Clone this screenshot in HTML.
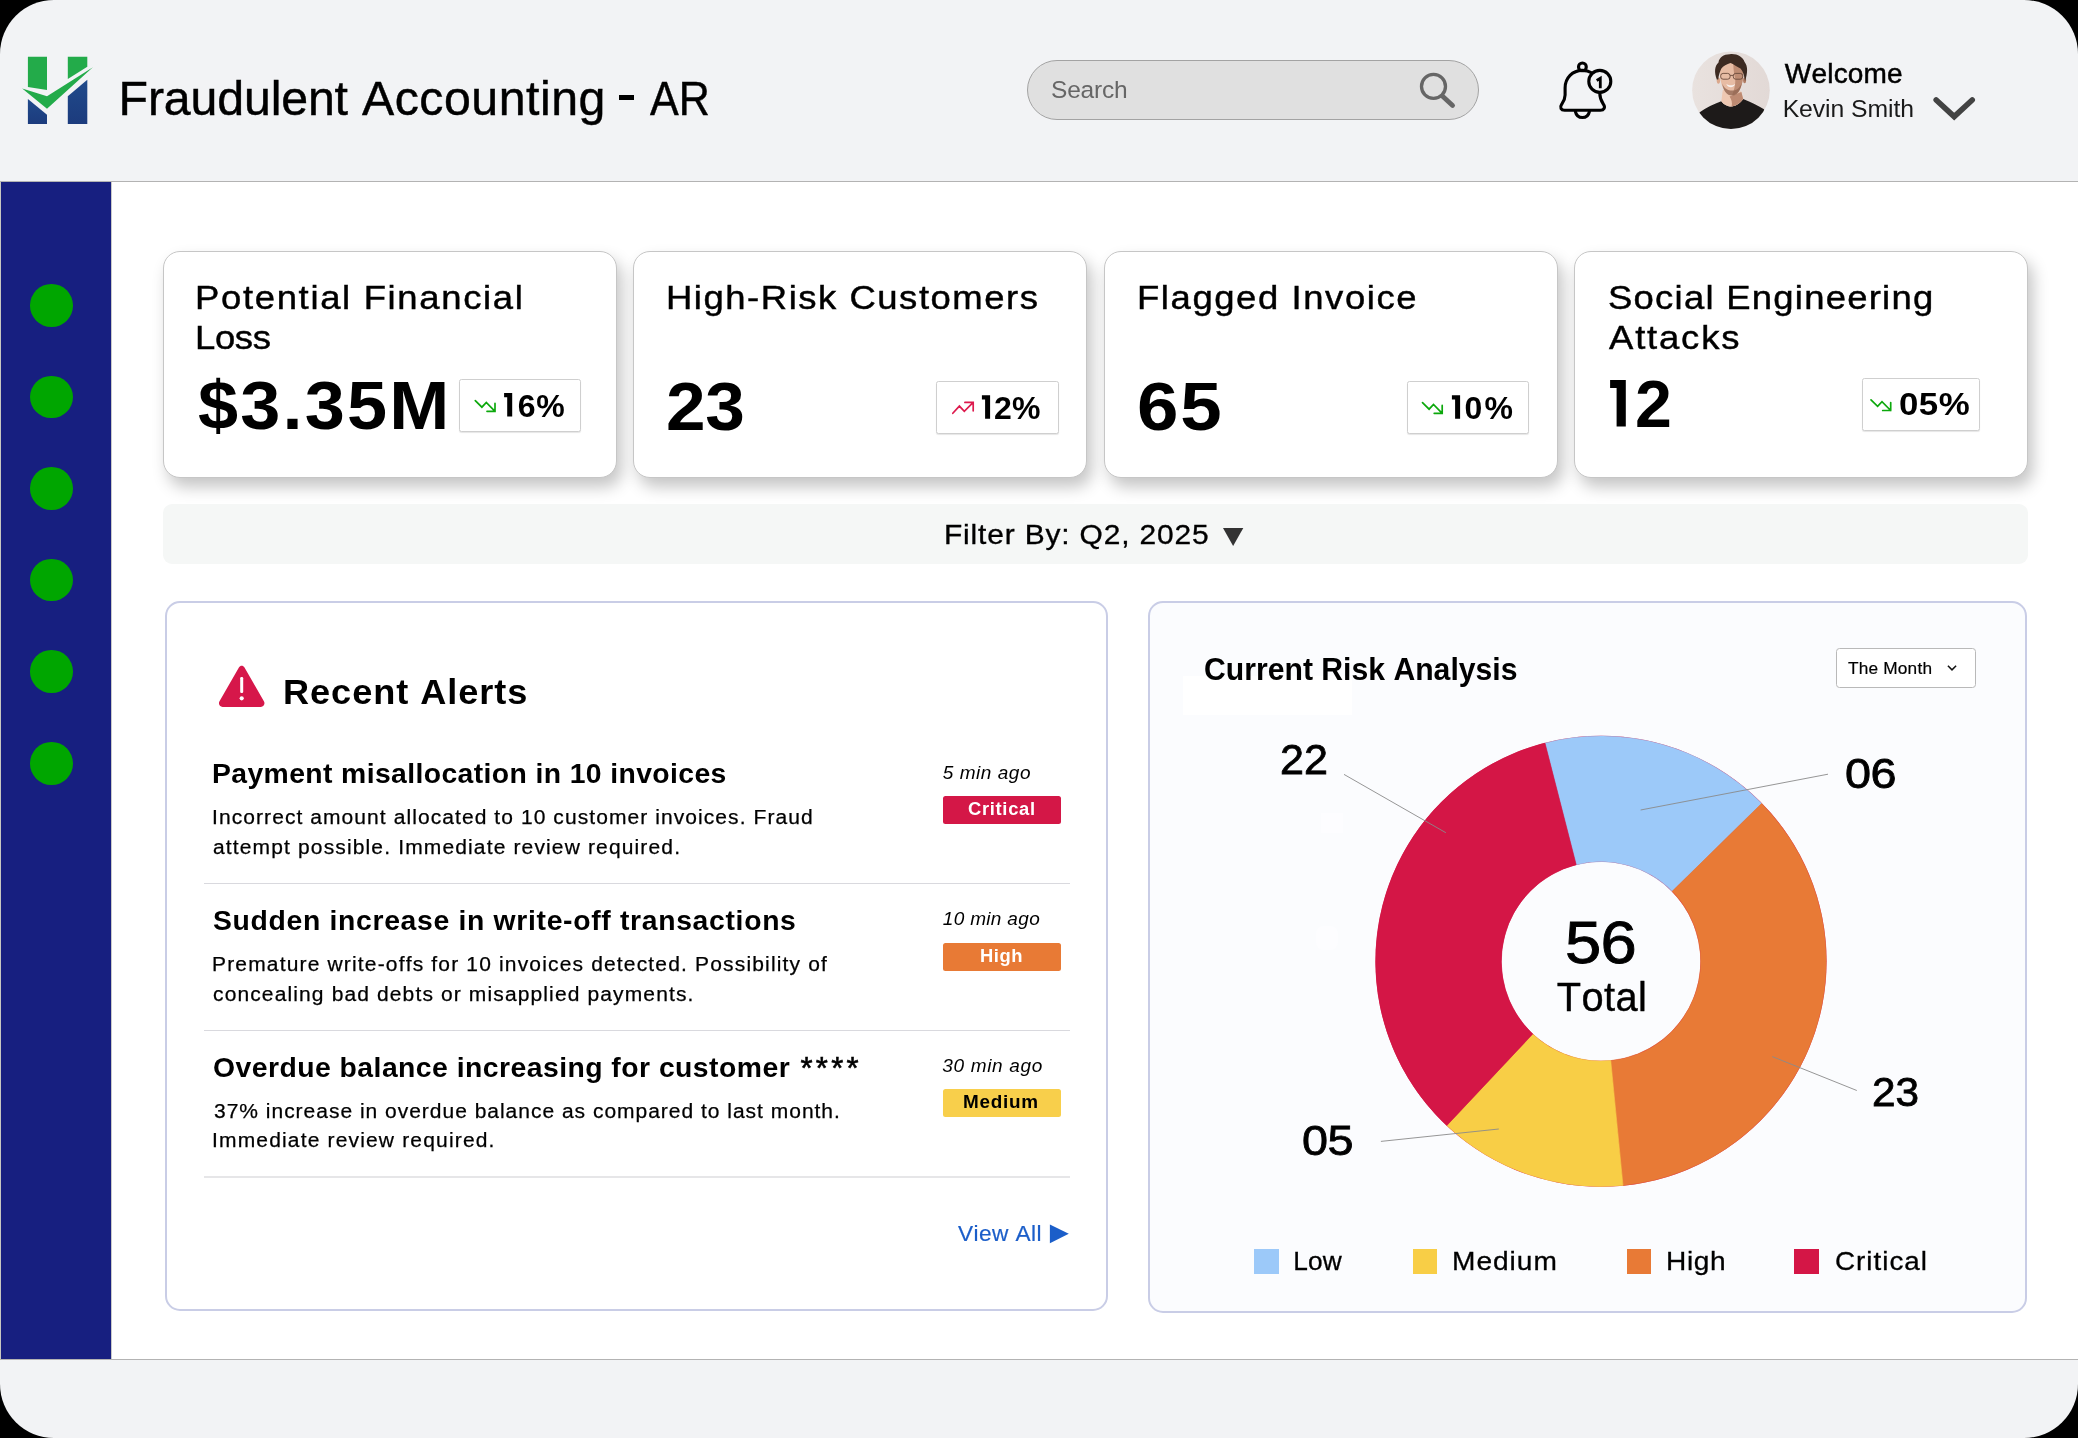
<!DOCTYPE html>
<html><head><meta charset="utf-8"><title>Fraudulent Accounting - AR</title>
<style>
*{box-sizing:border-box;margin:0;padding:0}
html,body{width:2078px;height:1438px;background:#000;overflow:hidden}
body{font-family:"Liberation Sans",sans-serif;color:#000}
.page{position:absolute;left:0;top:0;width:2078px;height:1438px;background:#f2f3f5;border-radius:54px;overflow:hidden;will-change:transform}
.a{position:absolute}
.t{position:absolute;white-space:nowrap;font-kerning:none;font-variant-ligatures:none}
.main{left:0;top:182px;width:2078px;height:1177px;background:#fff}
.hl{left:0;width:2078px;height:1.5px;background:#b3b3b3}
.side{left:1px;top:182px;width:110px;height:1177px;background:#171f80;box-shadow:1px 0 0 #c9c9c9}
.dot{left:30px;width:42.6px;height:42.6px;border-radius:50%;background:#00a600}
.card{top:251px;width:454px;height:227px;background:#fff;border:1px solid #c6c6c6;border-radius:17px;box-shadow:5px 9px 16px rgba(0,0,0,.23)}
.pb{background:#fff;border:1px solid #cfcfcf;border-radius:2.5px;box-shadow:0 1px 1px rgba(0,0,0,.10)}
.filter{left:163px;top:504px;width:1865px;height:60px;background:#f5f7f6;border-radius:9px}
.panel{border:2px solid #c9cde6;border-radius:15px}
.div{left:204px;width:865.5px;height:1.5px;background:#d9d9de}
.bd{left:942.5px;width:118px;height:28px;border-radius:2.5px}
.lg{top:1249.4px;width:24.8px;height:24.6px}
</style></head><body>
<div class="page">
<div class="a main"></div>
<div class="a hl" style="top:180.6px"></div>
<div class="a hl" style="top:1358.8px"></div>
<div class="a" style="left:0;top:182px;width:1px;height:1177px;background:#c7c7c1"></div>
<div class="a side"></div>
<div class="a dot" style="top:284px"></div>
<div class="a dot" style="top:375.6px"></div>
<div class="a dot" style="top:467.1px"></div>
<div class="a dot" style="top:558.8px"></div>
<div class="a dot" style="top:650.4px"></div>
<div class="a dot" style="top:742.1px"></div>

<!-- logo -->
<svg class="a" style="left:0;top:0" width="130" height="160" viewBox="0 0 130 160">
<defs><linearGradient id="gb" x1="0" y1="0" x2="0" y2="1"><stop offset="0" stop-color="#204a8b"/><stop offset="1" stop-color="#1c3b7d"/></linearGradient></defs>
<path d="M27.9 56.7H47V90L27.9 87Z" fill="#23ab4a"/>
<path d="M67.8 56.7H87.3V66.7L67.8 78.9Z" fill="#23ab4a"/>
<path d="M27.9 98.9L47 114.8V124H27.9Z" fill="url(#gb)"/>
<path d="M67.8 96.2L87.3 79.8V124H67.8Z" fill="url(#gb)"/>
<path d="M22.2 88.4L47 96.2L92.9 67.2L47 108.7Z" fill="#23ab4a"/>
</svg>

<div class="a" style="left:618.7px;top:95.4px;width:15.4px;height:4.5px;background:#000"></div>
<!-- search -->
<div class="a" style="left:1027px;top:60px;width:452px;height:59.6px;border-radius:30px;background:#e0e0e0;border:1.2px solid #a3a3a3"></div>
<svg class="a" style="left:1410px;top:65px" width="60" height="50" viewBox="1410 65 60 50">
<circle cx="1433.5" cy="86.4" r="12" fill="none" stroke="#666" stroke-width="3.3"/>
<path d="M1442.6 96.2 L1452.6 105.4" stroke="#666" stroke-width="4.8" stroke-linecap="round"/>
</svg>

<!-- bell -->
<svg class="a" style="left:1550px;top:55px" width="70" height="70" viewBox="1550 55 70 70" fill="none" stroke="#000" stroke-width="3.1" stroke-linecap="round" stroke-linejoin="round">
<circle cx="1582.4" cy="66.9" r="3.9"/>
<path d="M1591.5 72.8C1589 71.2 1586 70.4 1582.4 70.4C1572.5 70.4 1565.1 78 1565.1 88L1565.1 95C1565.1 99.5 1563.6 101.5 1561.6 104.4C1559.5 107.5 1561 110.2 1564.6 110.2L1600.4 110.2C1604 110.2 1605.6 107.5 1603.5 104.4C1601.4 101.3 1599.8 99 1599.8 93.5"/>
<path d="M1575.4 111.6C1576.2 115.4 1579 117.5 1582.4 117.5C1585.8 117.5 1588.6 115.4 1589.4 111.6"/>
<circle cx="1599.8" cy="81.4" r="11" fill="#f2f3f5"/>
<path d="M1596.7 80.5L1600.3 78.3L1600.3 88.2" stroke-width="2.8" stroke-linejoin="miter" stroke-linecap="butt"/>
</svg>

<!-- avatar -->
<svg class="a" style="left:1691px;top:50px" width="80" height="80" viewBox="1691 50 80 80">
<defs><clipPath id="av"><circle cx="1730.95" cy="90.2" r="38.8"/></clipPath>
<linearGradient id="avb" x1="0" y1="0" x2="1" y2="0"><stop offset="0" stop-color="#e9e2df"/><stop offset="1" stop-color="#e2d9d6"/></linearGradient></defs>
<g clip-path="url(#av)">
<rect x="1691" y="50" width="80" height="80" fill="url(#avb)"/>
<path d="M1688 134L1699.7 112.3C1706 107.5 1714 104 1721.3 101.2C1724 105 1728 106.4 1731.2 106.4C1735.5 106.4 1740 103.5 1743.2 99.1C1750 102 1758 105.5 1764 109.3L1774 134Z" fill="#1d1a19"/>
<path d="M1722.8 90L1721.3 101.2C1724 105 1728 106.4 1731.2 106.4C1735.5 106.4 1740 103.5 1743.2 99.1L1741.2 91.5Z" fill="#eec8b2"/>
<path d="M1729.5 96.5L1741.4 92L1743.2 99.1C1740 103.5 1736 106.2 1731.6 106.4C1732.6 103 1731.5 99.5 1729.5 96.5Z" fill="#bd8a72"/>
<ellipse cx="1718.4" cy="80.6" rx="1.7" ry="3.1" fill="#dba88c"/><ellipse cx="1744.6" cy="80.2" rx="1.5" ry="3" fill="#b07c63"/>
<path d="M1719.8 72C1719.8 64 1725 61 1731.5 61C1738.5 61 1743.6 64.5 1743.4 73C1743.4 83 1739.5 95.4 1732 95.4C1725 95.4 1719.8 84 1719.8 72Z" fill="#e7bca4"/>
<path d="M1733.4 61.2C1739.2 61.6 1743.6 65 1743.4 73C1743.4 83 1739.5 95.4 1732 95.4C1734.6 89 1736.4 82 1734.6 76C1733.6 71 1733.2 66 1733.4 61.2Z" fill="#b47f66" opacity=".8"/>
<path d="M1722.3 83.5C1724.5 89 1728 90.6 1732 90.6C1736 90.6 1739.6 88.4 1741.6 83.2C1740.8 90.6 1737 95.6 1732 95.6C1726.6 95.6 1723.1 90.2 1722.3 83.5Z" fill="#8f6450" opacity=".75"/>
<path d="M1726.3 83.9C1729 85.7 1733 85.7 1735.2 83.7C1734 88.2 1728 88.4 1726.3 83.9Z" fill="#f7f1ed"/>
<path d="M1716.8 79.6C1714 72 1714.6 66 1718.5 62.5C1719 57.5 1724 54 1730 54.2C1737 53.5 1743 57 1744.6 62C1748 66 1747.8 73 1745 81.2C1744.4 76 1743.2 71.5 1740.5 68.5C1736.5 66.5 1733.5 64 1730.5 63C1727 64 1723 66 1721.4 68.5C1719.8 71.5 1718.6 75.5 1718.3 79.6Z" fill="#3c2a21"/>
<g fill="none" stroke="#6a4a3b" stroke-width="0.9"><rect x="1720.7" y="73.4" width="9.4" height="5.8" rx="2.4"/><rect x="1733.3" y="73.4" width="9.4" height="5.8" rx="2.4"/><path d="M1730.1 75.4L1733.3 75.4"/></g>
</g>
</svg>

<!-- chevron -->
<svg class="a" style="left:1925px;top:90px" width="60" height="40" viewBox="1925 90 60 40"><path d="M1936.2 100L1954.2 116.6L1972.2 100" fill="none" stroke="#434343" stroke-width="5.6" stroke-linecap="round" stroke-linejoin="miter"/></svg>

<!-- cards -->
<div class="a card" style="left:163px"></div>
<div class="a card" style="left:633px"></div>
<div class="a card" style="left:1104px"></div>
<div class="a card" style="left:1574px"></div>
<div class="a pb" style="left:459.3px;top:379.3px;width:121.5px;height:52.5px"></div>
<div class="a pb" style="left:936.2px;top:381.2px;width:122.5px;height:52.8px"></div>
<div class="a pb" style="left:1406.5px;top:381.2px;width:122.5px;height:52.8px"></div>
<div class="a pb" style="left:1862.1px;top:378.1px;width:118px;height:53px"></div>
<svg class="a" style="left:0;top:370px" width="2078" height="70" viewBox="0 370 2078 70" fill="none" stroke-width="1.7" stroke-linecap="round" stroke-linejoin="miter">
<g stroke="#0ca80c">
<path d="M475.3 400.6L481.9 407.2L486.3 402.5L495 411.3M495 403.4L495 411.3L487 411.3"/>
<path d="M1422.5 402.6L1429.1 409.2L1433.5 404.5L1442.2 413.3M1442.2 405.4L1442.2 413.3L1434.2 413.3"/>
<path d="M1871 399.8L1877.6 406.4L1882 401.7L1890.7 410.5M1890.7 402.6L1890.7 410.5L1882.7 410.5"/>
</g>
<path stroke="#dd1a4d" d="M952.8 413.3L959.4 406.1L964.3 411.3L973.2 402.4M964.9 402.4L973.2 402.4L973.2 410.8"/>
</svg>

<!-- filter -->
<div class="a filter"></div>
<svg class="a" style="left:1220px;top:524px" width="30" height="26" viewBox="1220 524 30 26"><path d="M1223 527.9L1243.3 527.9L1233.1 545.9Z" fill="#333"/></svg>

<!-- alerts panel -->
<div class="a panel" style="left:164.6px;top:600.5px;width:943.4px;height:710px;background:#fff"></div>
<svg class="a" style="left:210px;top:660px" width="60" height="52" viewBox="210 660 60 52">
<path d="M238.9 667.6C240.3 665.2 243.1 665.2 244.5 667.6L263.9 701.3C265.4 703.9 263.8 706.9 260.8 706.9L222.6 706.9C219.6 706.9 218 703.9 219.5 701.3Z" fill="#d6174a"/>
<rect x="240.2" y="677" width="3" height="16" rx="1.2" fill="#fff"/><circle cx="241.7" cy="698.3" r="2.1" fill="#fff"/>
</svg>
<div class="a div" style="top:882.6px"></div>
<div class="a div" style="top:1029.6px"></div>
<div class="a div" style="top:1176.3px;background:#e6e6e8"></div>
<div class="a bd" style="top:796px;background:#d41747"></div>
<div class="a bd" style="top:942.6px;background:#e87a35"></div>
<div class="a bd" style="top:1089.2px;background:#f8cf4b"></div>
<svg class="a" style="left:1045px;top:1220px" width="30" height="28" viewBox="1045 1220 30 28"><path d="M1049.9 1224.4L1068.8 1233.8L1049.9 1243.2Z" fill="#1b5ec9"/></svg>

<!-- risk panel -->
<div class="a panel" style="left:1148.4px;top:600.5px;width:879px;height:712px;background:#fbfcfe"></div>
<div class="a" style="left:1183px;top:675.6px;width:169px;height:39.4px;background:#fff"></div>
<div class="a" style="left:1321.4px;top:812.7px;width:21.8px;height:20px;background:#fdfdff"></div>
<div class="a" style="left:1316px;top:926px;width:22px;height:24px;background:#fdfdff;border-radius:8px"></div>
<div class="a" style="left:1836px;top:648.2px;width:140px;height:39.6px;background:#fff;border:1px solid #b9b9b9;border-radius:3.5px"></div>
<svg class="a" style="left:1940px;top:660px" width="24" height="16" viewBox="1940 660 24 16"><path d="M1947.9 665.8L1952 669.9L1956.1 665.8" fill="none" stroke="#111" stroke-width="1.5"/></svg>
<svg class="a" style="left:1150px;top:700px" width="876" height="520" viewBox="1150 700 876 520">
<circle cx="1601.0" cy="961.3" r="225.54999999999998" fill="#d41646"/>
<circle cx="1601.0" cy="961.3" r="99.5" fill="#fbfcfe"/>
<path d="M1545.00 743.18A225.2 225.2 0 0 1 1761.62 803.46L1672.18 891.35A99.8 99.8 0 0 0 1576.18 864.64Z" fill="#9cc9f9" stroke="#9cc9f9" stroke-width="0.6"/>
<path d="M1761.62 803.46A225.2 225.2 0 0 1 1622.98 1185.43L1610.74 1060.62A99.8 99.8 0 0 0 1672.18 891.35Z" fill="#e87a36" stroke="#e87a36" stroke-width="0.6"/>
<path d="M1622.98 1185.43A225.2 225.2 0 0 1 1446.84 1125.46L1532.68 1034.05A99.8 99.8 0 0 0 1610.74 1060.62Z" fill="#f8ce46" stroke="#f8ce46" stroke-width="0.6"/>
<path d="M1446.84 1125.46A225.2 225.2 0 0 1 1545.00 743.18L1576.18 864.64A99.8 99.8 0 0 0 1532.68 1034.05Z" fill="#d41646" stroke="#d41646" stroke-width="0.6"/>
<g stroke="#8a8a8a" stroke-width="0.9" fill="none">
<path d="M1344 774.4L1445.8 832.7"/>
<path d="M1640.6 810L1828 774.2"/>
<path d="M1772.3 1056.6L1856.8 1090.5"/>
<path d="M1380.9 1141.4L1498.8 1129"/>
</g>
</svg>
<div class="a lg" style="left:1253.8px;background:#9cc9f9"></div>
<div class="a lg" style="left:1412.7px;background:#f8ce46"></div>
<div class="a lg" style="left:1626.7px;background:#e87a36"></div>
<div class="a lg" style="left:1794.3px;background:#d41646"></div>

<svg class="a" style="left:0;top:370px" width="2078" height="70" viewBox="0 370 2078 70">
<path d="M1610.1 380.1H1625.8V426.6H1616.6V388.1H1610.1Z" fill="#000"/>
<path d="M504.1 393.1H512.2V416.6H507.2V397.2H504.1Z" fill="#000"/>
<path d="M981.9 395.3H990.1V418.7H985.1V399.5H981.9Z" fill="#000"/>
<path d="M1451.9 395.3H1460.1V418.7H1455.1V399.5H1451.9Z" fill="#000"/>
</svg>
<div class="t" id="title" style="left:118.57px;top:74.30px;font-size:48.25px;line-height:48.25px;letter-spacing:-0.134px;-webkit-text-stroke:0.45px #000;">Fraudulent</div>
<div class="t" id="title2" style="left:361.93px;top:74.30px;font-size:48.25px;line-height:48.25px;letter-spacing:0.525px;-webkit-text-stroke:0.45px #000;">Accounting</div>
<div class="t" id="title4" style="left:649.64px;top:74.30px;font-size:48.25px;line-height:48.25px;letter-spacing:0.000px;transform:scaleX(0.8926559215665563);transform-origin:0 0;-webkit-text-stroke:0.45px #000;">AR</div>
<div class="t" id="search" style="left:1051.09px;top:77.61px;font-size:24.50px;line-height:24.50px;letter-spacing:-0.225px;color:#666;">Search</div>
<div class="t" id="welcome" style="left:1784.83px;top:59.74px;font-size:28.00px;line-height:28.00px;letter-spacing:0.196px;-webkit-text-stroke:0.5px #000;">Welcome</div>
<div class="t" id="kevin" style="left:1782.67px;top:97.19px;font-size:24.75px;line-height:24.75px;letter-spacing:-0.061px;color:#1a1a1a;">Kevin Smith</div>
<div class="t" id="c1a" style="left:195.33px;top:280.67px;font-size:33.75px;line-height:33.75px;letter-spacing:1.545px;transform:scaleX(1.08);transform-origin:0 0;-webkit-text-stroke:0.45px #000;">Potential Financial</div>
<div class="t" id="c1b" style="left:195.33px;top:320.67px;font-size:33.75px;line-height:33.75px;letter-spacing:-0.320px;transform:scaleX(1.08);transform-origin:0 0;-webkit-text-stroke:0.45px #000;">Loss</div>
<div class="t" id="c1n" style="left:197.85px;top:370.57px;font-size:68.00px;line-height:68.00px;letter-spacing:2.029px;font-weight:bold;transform:scaleX(1.06);transform-origin:0 0;">$3.35M</div>
<div class="t" id="c1p" style="left:517.63px;top:389.76px;font-size:32.00px;line-height:32.00px;letter-spacing:0.866px;font-weight:bold;">6%</div>
<div class="t" id="c2a" style="left:666.03px;top:280.67px;font-size:33.75px;line-height:33.75px;letter-spacing:1.422px;transform:scaleX(1.08);transform-origin:0 0;-webkit-text-stroke:0.45px #000;">High-Risk Customers</div>
<div class="t" id="c2n" style="left:666.33px;top:373.29px;font-size:67.75px;line-height:67.75px;letter-spacing:-0.181px;font-weight:bold;transform:scaleX(1.05);transform-origin:0 0;">23</div>
<div class="t" id="c2p" style="left:993.99px;top:391.76px;font-size:32.00px;line-height:32.00px;letter-spacing:0.103px;font-weight:bold;">2%</div>
<div class="t" id="c3a" style="left:1136.53px;top:280.67px;font-size:33.75px;line-height:33.75px;letter-spacing:1.470px;transform:scaleX(1.08);transform-origin:0 0;-webkit-text-stroke:0.45px #000;">Flagged Invoice</div>
<div class="t" id="c3n" style="left:1137.27px;top:373.29px;font-size:67.75px;line-height:67.75px;letter-spacing:1.735px;font-weight:bold;transform:scaleX(1.1);transform-origin:0 0;">65</div>
<div class="t" id="c3p" style="left:1464.43px;top:391.76px;font-size:32.00px;line-height:32.00px;letter-spacing:2.159px;font-weight:bold;">0%</div>
<div class="t" id="c4a" style="left:1607.87px;top:280.67px;font-size:33.75px;line-height:33.75px;letter-spacing:1.160px;transform:scaleX(1.08);transform-origin:0 0;-webkit-text-stroke:0.45px #000;">Social Engineering</div>
<div class="t" id="c4b" style="left:1609.45px;top:320.67px;font-size:33.75px;line-height:33.75px;letter-spacing:1.686px;transform:scaleX(1.08);transform-origin:0 0;-webkit-text-stroke:0.45px #000;">Attacks</div>
<div class="t" id="c4n" style="left:1634.70px;top:369.60px;font-size:67.50px;line-height:67.50px;letter-spacing:0.000px;font-weight:bold;transform:scaleX(0.9816122004357326);transform-origin:0 0;">2</div>
<div class="t" id="c4p" style="left:1898.92px;top:388.34px;font-size:32.25px;line-height:32.25px;letter-spacing:0.410px;font-weight:bold;transform:scaleX(1.08);transform-origin:0 0;">05%</div>
<div class="t" id="filter" style="left:943.92px;top:520.12px;font-size:28.50px;line-height:28.50px;letter-spacing:0.798px;transform:scaleX(1.05);transform-origin:0 0;-webkit-text-stroke:0.35px #000;">Filter By: Q2, 2025</div>
<div class="t" id="ra" style="left:282.58px;top:674.83px;font-size:34.75px;line-height:34.75px;letter-spacing:0.907px;font-weight:bold;transform:scaleX(1.04);transform-origin:0 0;">Recent Alerts</div>
<div class="t" id="a1t" style="left:211.91px;top:760.37px;font-size:27.50px;line-height:27.50px;letter-spacing:0.382px;font-weight:bold;transform:scaleX(1.03);transform-origin:0 0;">Payment misallocation in 10 invoices</div>
<div class="t" id="a1d1" style="left:211.99px;top:807.22px;font-size:20.00px;line-height:20.00px;letter-spacing:1.024px;transform:scaleX(1.05);transform-origin:0 0;-webkit-text-stroke:0.25px #000;">Incorrect amount allocated to 10 customer invoices. Fraud</div>
<div class="t" id="a1d2" style="left:212.63px;top:837.32px;font-size:20.00px;line-height:20.00px;letter-spacing:1.088px;transform:scaleX(1.05);transform-origin:0 0;-webkit-text-stroke:0.25px #000;">attempt possible. Immediate review required.</div>
<div class="t" id="a2t" style="left:212.98px;top:907.17px;font-size:27.50px;line-height:27.50px;letter-spacing:0.662px;font-weight:bold;transform:scaleX(1.03);transform-origin:0 0;">Sudden increase in write-off transactions</div>
<div class="t" id="a2d1" style="left:212.20px;top:954.02px;font-size:20.00px;line-height:20.00px;letter-spacing:1.108px;transform:scaleX(1.05);transform-origin:0 0;-webkit-text-stroke:0.25px #000;">Premature write-offs for 10 invoices detected. Possibility of</div>
<div class="t" id="a2d2" style="left:212.73px;top:983.62px;font-size:20.00px;line-height:20.00px;letter-spacing:1.073px;transform:scaleX(1.05);transform-origin:0 0;-webkit-text-stroke:0.25px #000;">concealing bad debts or misapplied payments.</div>
<div class="t" id="a3t" style="left:213.14px;top:1053.87px;font-size:27.50px;line-height:27.50px;letter-spacing:0.456px;font-weight:bold;transform:scaleX(1.03);transform-origin:0 0;">Overdue balance increasing for customer</div>
<div class="t" id="a3s" style="left:800.50px;top:1053.30px;font-size:31.00px;line-height:31.00px;letter-spacing:3.309px;-webkit-text-stroke:0.6px #000;">****</div>
<div class="t" id="a3d1" style="left:213.63px;top:1100.62px;font-size:20.00px;line-height:20.00px;letter-spacing:0.939px;transform:scaleX(1.05);transform-origin:0 0;-webkit-text-stroke:0.25px #000;">37% increase in overdue balance as compared to last month.</div>
<div class="t" id="a3d2" style="left:212.19px;top:1130.42px;font-size:20.00px;line-height:20.00px;letter-spacing:1.110px;transform:scaleX(1.05);transform-origin:0 0;-webkit-text-stroke:0.25px #000;">Immediate review required.</div>
<div class="t" id="tm1" style="left:942.87px;top:762.56px;font-size:19.00px;line-height:19.00px;letter-spacing:0.524px;font-style:italic;">5 min ago</div>
<div class="t" id="tm2" style="left:942.81px;top:909.46px;font-size:19.00px;line-height:19.00px;letter-spacing:0.321px;font-style:italic;">10 min ago</div>
<div class="t" id="tm3" style="left:942.35px;top:1056.26px;font-size:19.00px;line-height:19.00px;letter-spacing:0.660px;font-style:italic;">30 min ago</div>
<div class="t" id="b1" style="left:967.85px;top:801.33px;font-size:17.50px;line-height:17.50px;letter-spacing:0.648px;font-weight:bold;color:#fff;transform:scaleX(1.05);transform-origin:0 0;">Critical</div>
<div class="t" id="b2" style="left:979.87px;top:948.23px;font-size:17.50px;line-height:17.50px;letter-spacing:0.491px;font-weight:bold;color:#fff;transform:scaleX(1.05);transform-origin:0 0;">High</div>
<div class="t" id="b3" style="left:963.34px;top:1094.33px;font-size:17.50px;line-height:17.50px;letter-spacing:0.655px;font-weight:bold;transform:scaleX(1.08);transform-origin:0 0;">Medium</div>
<div class="t" id="va" style="left:958.30px;top:1223.22px;font-size:22.00px;line-height:22.00px;letter-spacing:0.405px;color:#1b5ec9;transform:scaleX(1.03);transform-origin:0 0;-webkit-text-stroke:0.2px #1b5ec9;">View All</div>
<div class="t" id="cra" style="left:1204.36px;top:654.07px;font-size:31.75px;line-height:31.75px;letter-spacing:0.000px;font-weight:bold;transform:scaleX(0.9500248346963828);transform-origin:0 0;">Current Risk Analysis</div>
<div class="t" id="tmo" style="left:1847.91px;top:659.94px;font-size:17.25px;line-height:17.25px;letter-spacing:0.206px;-webkit-text-stroke:0.2px #000;">The Month</div>
<div class="t" id="n22" style="left:1280.23px;top:739.00px;font-size:41.75px;line-height:41.75px;letter-spacing:0.000px;transform:scaleX(1.0322151064666056);transform-origin:0 0;-webkit-text-stroke:0.8px #000;">22</div>
<div class="t" id="n06" style="left:1844.77px;top:752.80px;font-size:41.75px;line-height:41.75px;letter-spacing:-0.384px;transform:scaleX(1.12);transform-origin:0 0;-webkit-text-stroke:0.8px #000;">06</div>
<div class="t" id="n23" style="left:1871.57px;top:1072.42px;font-size:41.25px;line-height:41.25px;letter-spacing:0.000px;transform:scaleX(1.0263068090981782);transform-origin:0 0;-webkit-text-stroke:0.8px #000;">23</div>
<div class="t" id="n05" style="left:1302.07px;top:1120.27px;font-size:42.50px;line-height:42.50px;letter-spacing:-0.555px;transform:scaleX(1.1);transform-origin:0 0;-webkit-text-stroke:0.8px #000;">05</div>
<div class="t" id="n56" style="left:1565.44px;top:912.78px;font-size:59.25px;line-height:59.25px;letter-spacing:-0.655px;transform:scaleX(1.1);transform-origin:0 0;-webkit-text-stroke:0.9px #000;">56</div>
<div class="t" id="total" style="left:1556.71px;top:978.09px;font-size:39.75px;line-height:39.75px;letter-spacing:0.420px;-webkit-text-stroke:0.4px #000;">Total</div>
<div class="t" id="l1" style="left:1293.20px;top:1248.12px;font-size:26.25px;line-height:26.25px;letter-spacing:0.217px;-webkit-text-stroke:0.3px #000;">Low</div>
<div class="t" id="l2" style="left:1451.95px;top:1248.12px;font-size:26.25px;line-height:26.25px;letter-spacing:0.927px;transform:scaleX(1.07);transform-origin:0 0;-webkit-text-stroke:0.3px #000;">Medium</div>
<div class="t" id="l3" style="left:1665.55px;top:1248.12px;font-size:26.25px;line-height:26.25px;letter-spacing:0.580px;transform:scaleX(1.07);transform-origin:0 0;-webkit-text-stroke:0.3px #000;">High</div>
<div class="t" id="l4" style="left:1834.84px;top:1248.12px;font-size:26.25px;line-height:26.25px;letter-spacing:0.937px;transform:scaleX(1.06);transform-origin:0 0;-webkit-text-stroke:0.3px #000;">Critical</div>
</div>
</body></html>
